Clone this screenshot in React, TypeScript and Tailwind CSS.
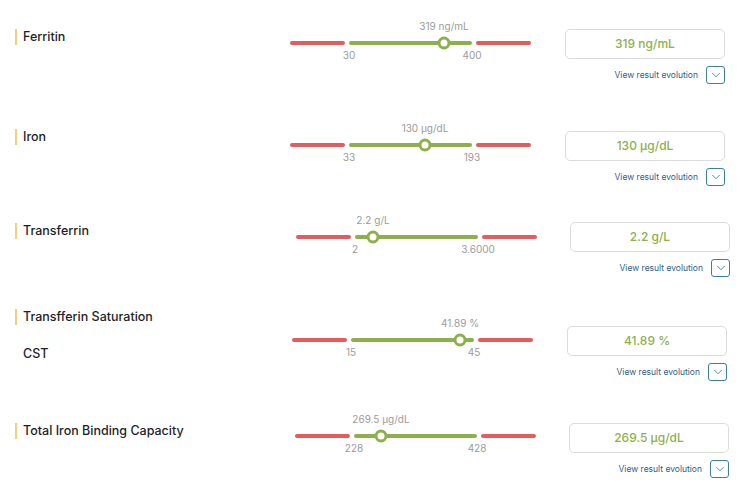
import { ChevronDown } from 'lucide-react';

interface Marker {
    name: string;
    sub?: string;
    value: string;
    min: string;
    max: string;
    knob: number; // px into the green segment
    rowClass: string;
    labelClass: string;
    leftClass: string;
    boxClass: string;
    gapClass: string;
}

const markers: Marker[] = [
    { name: 'Ferritin', value: '319 ng/mL', min: '30', max: '400', knob: 95, rowClass: 'h-[102px]', labelClass: 'mt-[10px]', leftClass: 'w-[275px]', boxClass: 'mt-[10px]', gapClass: 'ml-[34px]' },
    { name: 'Iron', value: '130 µg/dL', min: '33', max: '193', knob: 76, rowClass: 'h-[92px]', labelClass: 'mt-[8px]', leftClass: 'w-[275px]', boxClass: 'mt-[10px]', gapClass: 'ml-[34px]' },
    { name: 'Transferrin', value: '2.2 g/L', min: '2', max: '3.6000', knob: 18, rowClass: 'h-[103px]', labelClass: 'mt-[10px]', leftClass: 'w-[281px]', boxClass: 'mt-[9px]', gapClass: 'ml-[33px]' },
    { name: 'Transfferin Saturation', sub: 'CST', value: '41.89 %', min: '15', max: '45', knob: 109, rowClass: 'h-[96px]', labelClass: '-mt-[7px]', leftClass: 'w-[277px]', boxClass: 'mt-[10px]', gapClass: 'ml-[34px]' },
    { name: 'Total Iron Binding Capacity', value: '269.5 µg/dL', min: '228', max: '428', knob: 27, rowClass: 'h-[88px]', labelClass: 'mt-[11px]', leftClass: 'w-[280px]', boxClass: 'mt-[11px]', gapClass: 'ml-[33px]' },
];

function RangeBar({ m }: { m: Marker }) {
    const knobX = 59 + m.knob;
    return (
        <div className="w-[241px] shrink-0">
            {/* value above the knob */}
            <div className="relative h-[14px]">
                <span
                    className="absolute top-0 -translate-x-1/2 whitespace-nowrap text-[10px] leading-[14px] text-[#9b9b9b]"
                    style={{ left: knobX }}
                >
                    {m.value}
                </span>
            </div>
            {/* track */}
            <div className="relative mt-[3px] flex h-[14px] items-center gap-[4px]">
                <div className="h-[4px] w-[55px] rounded-full bg-[#e65c5c]" />
                <div className="h-[4px] w-[123px] rounded-full bg-[#8db04c]" />
                <div className="h-[4px] w-[55px] rounded-full bg-[#e65c5c]" />
                <div
                    className="absolute top-1/2 h-[13px] w-[13px] -translate-x-1/2 -translate-y-1/2 rounded-full border-[3px] border-[#8db04c] bg-white"
                    style={{ left: knobX }}
                />
            </div>
            {/* normal range limits */}
            <div className="relative ml-[59px] h-[10px] w-[123px]">
                <span className="absolute left-0 top-0 -translate-x-1/2 text-[10px] leading-[10px] text-[#9b9b9b]">{m.min}</span>
                <span className="absolute right-0 top-0 translate-x-1/2 text-[10px] leading-[10px] text-[#9b9b9b]">{m.max}</span>
            </div>
        </div>
    );
}

export default function App() {
    return (
        <div className="min-h-[500px] bg-white pt-[19px] font-['Inter',sans-serif]">
            {markers.map(m => (
                <div key={m.name} className={`flex items-start pl-[15px] ${m.rowClass}`}>
                    <div className={`shrink-0 ${m.leftClass}`}>
                        <div className={m.labelClass}>
                            <div className="border-l-2 border-[#f6cf7a] pl-[6px] text-[12.5px] font-medium leading-[16px] text-[#1e1e2a]">
                                {m.name}
                            </div>
                            {m.sub && (
                                <div className="mt-[21px] pl-[8px] text-[12.5px] font-medium leading-[16px] text-[#1e1e2a]">{m.sub}</div>
                            )}
                        </div>
                    </div>
                    <RangeBar m={m} />
                    <div className={`w-[160px] shrink-0 ${m.gapClass} ${m.boxClass}`}>
                        <div className="flex h-[30px] items-center justify-center rounded-[5px] border border-[#dcdcdc] text-[12px] font-medium text-[#8db04c]">
                            {m.value}
                        </div>
                        <div className="mt-[7px] flex items-center justify-end gap-[8px]">
                            <span className="text-[8.5px] text-[#2f5d8c]">View result evolution</span>
                            <button className="flex h-[18px] w-[19px] items-center justify-center rounded-[3px] border border-[#3b7bb8] text-[#3b7bb8]">
                                <ChevronDown size={14} strokeWidth={1.5} />
                            </button>
                        </div>
                    </div>
                </div>
            ))}
        </div>
    );
}
